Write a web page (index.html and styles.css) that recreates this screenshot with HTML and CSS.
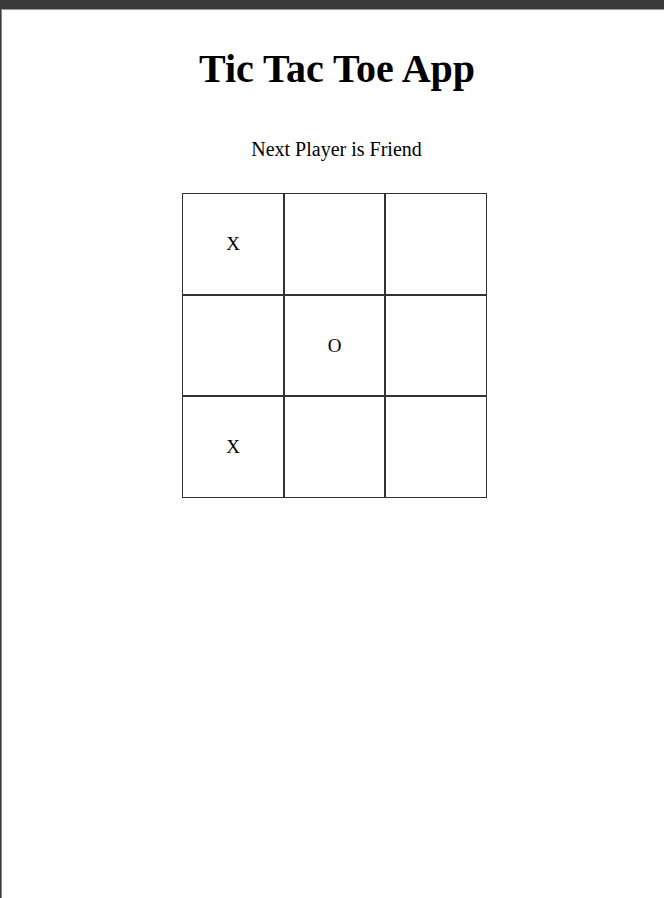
FILE: index.html
```html
<!DOCTYPE html>
<html lang="en">
<head>
    <meta charset="UTF-8">
    <title>Tic Tac Toe App</title>
    <link rel="stylesheet" href="styles.css">
</head>
<body>
    <div class="frame">
        <div class="game">
            <h1 class="title">Tic Tac Toe App</h1>
            <p class="status">Next Player is Friend</p>
            <div class="board">
                <button class="square">X</button>
                <button class="square"></button>
                <button class="square"></button>
                <button class="square"></button>
                <button class="square">O</button>
                <button class="square"></button>
                <button class="square">X</button>
                <button class="square"></button>
                <button class="square"></button>
            </div>
        </div>
    </div>
</body>
</html>
```

FILE: styles.css
```css
html, body {
    margin: 0;
    height: 100%;
}

body {
    background: #3a3a3a;
    font-family: 'Liberation Serif', 'Times New Roman', serif;
}

.frame {
    box-sizing: border-box;
    margin-top: 9px;
    height: calc(100% - 9px);
    margin-left: 1px;
    background: #fff;
    border-top: 1px solid #9a9a9a;
    border-left: 1px solid #8a8a8a;
}

.game {
    display: flex;
    flex-direction: column;
    align-items: center;
    padding-left: 4px;
}

.title {
    margin: 36px 0 0;
    padding-left: 4px;
    font-size: 40px;
    line-height: 46px;
}

.status {
    margin: 45px 0 0;
    padding-left: 3px;
    font-size: 20px;
    line-height: 24px;
}

.board {
    display: grid;
    grid-template-columns: 102px 101px 102px;
    grid-template-rows: 102px 101px 102px;
    margin-top: 32px;
    margin-right: 1px;
}

.square {
    box-sizing: border-box;
    margin: 0;
    padding: 0;
    background: #fff;
    border: 1px solid #333;
    font-family: inherit;
    font-size: 19px;
    color: #000;
}
```
